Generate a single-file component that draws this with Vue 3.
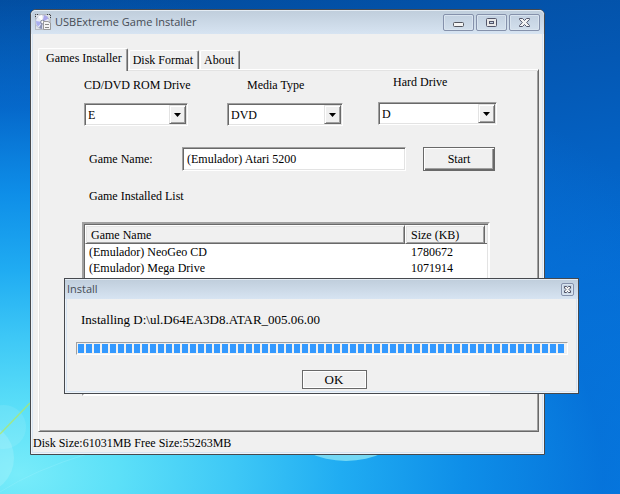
<script setup>
import { ref } from 'vue'

const tabs = ['Games Installer', 'Disk Format', 'About']
const activeTab = ref('Games Installer')

const fields = [
  { id: 'rom', label: 'CD/DVD ROM Drive', value: 'E' },
  { id: 'media', label: 'Media Type', value: 'DVD' },
  { id: 'hard', label: 'Hard Drive', value: 'D' },
]

const gameName = ref('(Emulador) Atari 5200')

const games = [
  { name: '(Emulador) NeoGeo CD', size: '1780672' },
  { name: '(Emulador) Mega Drive', size: '1071914' },
]
</script>

<template>
  <main class="desktop">
    <svg class="wallpaper" viewBox="0 0 620 494" preserveAspectRatio="none" aria-hidden="true">
      <circle cx="4" cy="427" r="22" fill="#ffffff" opacity="0.09" />
      <circle cx="-22" cy="458" r="36" fill="#ffffff" opacity="0.15" />
      <path d="M0 434 L30 403" stroke="#b4ea5c" stroke-width="1.5" opacity="0.7" />
      <path d="M0 492 Q34 470 90 453" stroke="#a8f4ff" stroke-width="1" fill="none" opacity="0.25" />
      <ellipse cx="346" cy="433" rx="52" ry="28" fill="#74d8f4" />
    </svg>

    <section class="window main-window">
      <header class="titlebar">
        <svg class="app-icon" viewBox="0 0 16 16" aria-hidden="true">
          <rect x="0.5" y="0.5" width="15" height="15" fill="#dfe3e8" stroke="#b4b9c0" />
          <path d="M0.5 3 V0.5 H4 M12 0.5 H15.5 V4" fill="none" stroke="#3c4048" stroke-dasharray="1 1" />
          <circle cx="7.5" cy="8" r="7" fill="#e8ebf5" stroke="#bcc2d2" />
          <path d="M7.5 8 L9 1 A7 7 0 0 1 13.500 4.500 Z" fill="#a9a6ea" />
          <path d="M7.5 8 L1 7 A7 7 0 0 0 3 12.500 Z" fill="#a9aeee" />
          <path d="M7.5 8 L3 2.800 A7 7 0 0 1 7 1 Z" fill="#ffffff" />
          <path d="M7.500 8 L4 13.500 A7 7 0 0 0 7 15 Z" fill="#8c93b5" />
          <circle cx="7.500" cy="8" r="1.800" fill="#fff" stroke="#7d8498" />
          <path d="M8.500 7.500 H13 L15.500 9 V15.500 H8.500 Z" fill="#f5f5f5" stroke="#9a9a9a" />
          <path d="M10 10.500 H14 M10 13.500 H14" stroke="#8a8a8a" />
        </svg>
        <h1 class="title">USBExtreme Game Installer</h1>
        <div class="caption-buttons">
          <button type="button" class="caption" aria-label="Minimize">
            <svg viewBox="0 0 31 17"><rect x="10.500" y="8.500" width="10" height="4" rx="1" fill="#f4f4f4" stroke="#53565f" /></svg>
          </button>
          <button type="button" class="caption" aria-label="Maximize">
            <svg viewBox="0 0 31 17">
              <rect x="10.500" y="4.500" width="10" height="8" rx="1" fill="#e8e8e8" stroke="#53566a" />
              <rect x="13.500" y="7.500" width="4" height="2" fill="#c4d2e2" stroke="#53566a" />
            </svg>
          </button>
          <button type="button" class="caption" aria-label="Close">
            <svg viewBox="0 0 31 17">
              <path d="M10.500 4.500 H13.500 L15.500 6.500 L17.500 4.500 H20.500 V5.500 L17.700 8.500 L20.500 11.500 V12.500 H17.500 L15.500 10.500 L13.500 12.500 H10.500 V11.500 L13.300 8.500 L10.500 5.500 Z" fill="#f4f4f4" stroke="#53566a" />
            </svg>
          </button>
        </div>
      </header>

      <div class="client">
        <div class="tabs" role="tablist">
          <button
            v-for="tab in tabs"
            :key="tab"
            type="button"
            role="tab"
            class="tab"
            :class="{ active: tab === activeTab }"
            :aria-selected="tab === activeTab"
            @click="activeTab = tab"
          >{{ tab }}</button>
        </div>

        <div class="panel" role="tabpanel">
          <div class="drives">
            <div v-for="field in fields" :key="field.id" class="field" :class="field.id">
              <label :for="field.id">{{ field.label }}</label>
              <div class="combo">
                <select :id="field.id">
                  <option>{{ field.value }}</option>
                </select>
                <span class="arrow" aria-hidden="true">
                  <svg viewBox="0 0 7 4"><path d="M0 0 H7 L3.500 4 Z" fill="#000" /></svg>
                </span>
              </div>
            </div>
          </div>

          <div class="name-row">
            <label for="game-name">Game Name:</label>
            <input id="game-name" v-model="gameName" type="text" />
            <button type="button" class="start">Start</button>
          </div>

          <h2 class="list-title">Game Installed List</h2>
          <div class="list">
            <table>
              <thead>
                <tr><th>Game Name</th><th class="size">Size (KB)</th><th class="rest"></th></tr>
              </thead>
              <tbody>
                <tr v-for="game in games" :key="game.name">
                  <td>{{ game.name }}</td>
                  <td class="size">{{ game.size }}</td>
                  <td></td>
                </tr>
              </tbody>
            </table>
          </div>
        </div>
        <footer class="status">Disk Size:61031MB Free Size:55263MB</footer>
      </div>
    </section>

    <section class="window dialog" role="dialog" aria-labelledby="dialog-title">
      <header class="titlebar small">
        <h2 id="dialog-title" class="title">Install</h2>
        <button type="button" class="caption mini" aria-label="Close">
          <svg viewBox="0 0 13 13">
            <path d="M3.500 3.500 H5.500 L6.500 4.500 L7.500 3.500 H9.500 V5 L8 6.500 L9.500 8 V9.500 H7.500 L6.500 8.500 L5.500 9.500 H3.500 V8 L5 6.500 L3.500 5 Z" fill="#f4f4f4" stroke="#4c4f62" />
          </svg>
        </button>
      </header>
      <div class="client dialog-body">
        <label class="message" for="install-progress">Installing D:\ul.D64EA3D8.ATAR_005.06.00</label>
        <progress id="install-progress" value="996" max="1000"></progress>
        <button type="button" class="ok">OK</button>
      </div>
    </section>
  </main>
</template>

<style>
body {
  margin: 0;
}
</style>

<style scoped>
* {
  box-sizing: border-box;
}

.desktop {
  position: relative;
  min-height: 100vh;
  overflow: hidden;
  font: 12px/16px "Liberation Serif", "Times New Roman", serif;
  color: #000;
  background:
    radial-gradient(ellipse 124% 98% at 3% 96%, #78ecfa 0%, #5ce0f8 13%, #3ec8f6 28%, #20acf2 42%, #0e8ee8 58%, rgba(6, 112, 214, 0.7) 76%, rgba(4, 84, 184, 0) 100%),
    linear-gradient(172deg, #024c9e 0%, #0458b4 25%, #046cd4 60%, #057ee8 100%);
}

.wallpaper {
  position: absolute;
  inset: 0;
  width: 100%;
  height: 100%;
}

.window {
  position: absolute;
  padding: 0 2px 2px;
  border: 1px solid #46494e;
  background: #d7e4f2;
  box-shadow: inset 0 0 0 1px #eef4fa;
}

.main-window {
  top: 9px;
  left: 30px;
  right: 75px;
  border-radius: 6px 6px 0 0;
}

.dialog {
  top: 278px;
  left: 64px;
  right: 41px;
  font-size: 13px;
}

.titlebar {
  display: flex;
  align-items: center;
  gap: 4px;
  height: 24px;
  margin: 0 -2px;
  padding: 0 4px;
  border-radius: 5px 5px 0 0;
  background: linear-gradient(#bfcddb, #d7e4f2);
  box-shadow: inset 0 1px #e4ecf4;
}

.titlebar.small {
  height: 20px;
  padding: 0 4px 0 2px;
  border-radius: 0;
}

.title {
  flex: 1;
  margin: 0;
  font: 11px/16px "Open Sans", "Noto Sans", sans-serif;
  color: #464c55;
}

.app-icon {
  width: 16px;
  height: 16px;
}

.caption-buttons {
  display: flex;
  gap: 2px;
}

.caption {
  display: flex;
  width: 31px;
  height: 17px;
  padding: 0;
  border: 1px solid #8591ab;
  border-radius: 2px;
  background: linear-gradient(#c2d0e0, #d2dfec);
  box-shadow: inset 0 0 0 1px #d9e4ef;
}

.caption svg {
  flex: none;
  width: 31px;
  height: 17px;
  margin: -1px;
}

.caption.mini,
.caption.mini svg {
  width: 13px;
  height: 13px;
}

.client {
  background: #f0f0f0;
}

.tabs {
  display: flex;
  align-items: flex-end;
  gap: 1px;
  padding: 14px 5px 0;
}

.tab {
  height: 19px;
  padding: 0 5px 0 3px;
  border: solid;
  border-width: 1px 1px 0;
  border-color: #fff #696969 #fff #fff;
  border-radius: 2px 2px 0 0;
  background: #f0f0f0;
  box-shadow: inset -1px 0 #a0a0a0;
  font: inherit;
  color: inherit;
}

.tab.active {
  position: relative;
  z-index: 1;
  height: 23px;
  margin-bottom: -2px;
  padding: 0 5px 5px 7px;
}

.panel {
  margin: 0 3px 0 5px;
  padding: 4px 0 35px;
  border: 1px solid;
  border-color: #fff #696969 #696969 #fff;
  box-shadow: inset 1px 1px #e3e3e3, inset -1px -1px #a0a0a0;
}

.drives {
  display: grid;
  grid-template-columns:
    minmax(0, 104fr) minmax(0, 39fr) minmax(0, 116fr)
    minmax(0, 35fr) minmax(0, 119fr);
  padding: 0 41px 0 45px;
}

.field {
  display: flex;
  flex-direction: column;
  gap: 10px;
  padding-top: 3px;
  white-space: nowrap;
}

.field.media {
  grid-column: 3;
}

.field.media label {
  padding-left: 20px;
}

.field.hard {
  grid-column: 5;
  gap: 12px;
  padding-top: 0;
}

.field.hard label {
  padding-left: 15px;
}

.combo,
.name-row input {
  border: 1px solid;
  border-color: #a0a0a0 #fff #fff #a0a0a0;
  background: #fff;
  box-shadow: inset 1px 1px #696969, inset -1px -1px #e3e3e3;
}

.combo {
  display: grid;
  grid-template-columns: 1fr 17px;
  height: 23px;
  padding: 1px;
}

.combo select {
  grid-area: 1 / 1 / 2 / 3;
  min-width: 0;
  padding: 0 0 0 2px;
  border: 0;
  border-radius: 0;
  appearance: none;
  background: transparent;
  font: inherit;
  color: inherit;
}

.arrow,
.start,
.ok {
  background: #f0f0f0;
  border: 1px solid;
  border-color: #e3e3e3 #696969 #696969 #e3e3e3;
  box-shadow: inset 1px 1px #fff, inset -1px -1px #a0a0a0;
}

.arrow {
  grid-area: 1 / 2;
  display: grid;
  place-items: center;
  pointer-events: none;
}

.arrow svg {
  width: 7px;
  height: 4px;
}

.name-row {
  display: flex;
  align-items: center;
  gap: 17px;
  margin-top: 21px;
  padding: 0 43px 0 50px;
}

.name-row label {
  width: 76px;
}

.name-row input {
  flex: 1;
  min-width: 0;
  height: 24px;
  padding: 0 4px;
  font: inherit;
  color: inherit;
}

.start,
.ok {
  padding: 0;
  font: inherit;
  color: inherit;
}

.start {
  width: 72px;
  height: 24px;
  border-color: #696969;
  box-shadow: inset 1px 1px #fff, inset -1px -1px #696969, inset -2px -2px #a0a0a0;
}

.list-title {
  margin: 17px 0 18px;
  padding-left: 50px;
  font: inherit;
}

.list {
  min-height: 174px;
  margin: 0 48px 0 43px;
  border: 2px solid;
  border-color: #a0a0a0 #fff #fff #a0a0a0;
  background: #fff;
  box-shadow: inset 1px 1px #696969, inset -1px -1px #e3e3e3;
  padding: 1px;
}

table {
  width: 100%;
  table-layout: fixed;
  border-collapse: separate;
  border-spacing: 0;
}

th {
  height: 19px;
  padding: 1px 5px 0;
  border: 1px solid;
  border-color: #fff #696969 #696969 #fff;
  background: #f0f0f0;
  box-shadow: inset 1px 1px #e3e3e3, inset -1px -1px #a0a0a0;
  font-weight: normal;
  text-align: left;
}

th.size {
  width: 80px;
}

th.rest {
  width: 2px;
  padding: 0;
  border-width: 0 0 1px;
  box-shadow: none;
}

td {
  padding: 0 4px;
}

td.size {
  padding-left: 6px;
}

td:last-child {
  padding: 0;
}

.status {
  height: 20px;
  padding-top: 3px;
}

.dialog-body {
  display: flex;
  flex-direction: column;
  padding: 13px 8px 2px 9px;
}

.message {
  padding-left: 5px;
}

progress {
  width: 100%;
  height: 13px;
  margin: 14px 0 15px;
  padding: 1px;
  appearance: none;
  border: 1px solid;
  border-color: #a0a0a0 #fff #fff #a0a0a0;
  background: #f0f0f0;
}

progress::-webkit-progress-bar {
  background: transparent;
}

progress::-webkit-progress-value {
  background: repeating-linear-gradient(90deg, #3399ff 0 6px, transparent 6px 8px);
}

.ok {
  align-self: center;
  width: 65px;
  height: 19px;
  margin-left: 24px;
  border-color: #696969;
  box-shadow: inset 0 0 0 1px #fff;
}
</style>
